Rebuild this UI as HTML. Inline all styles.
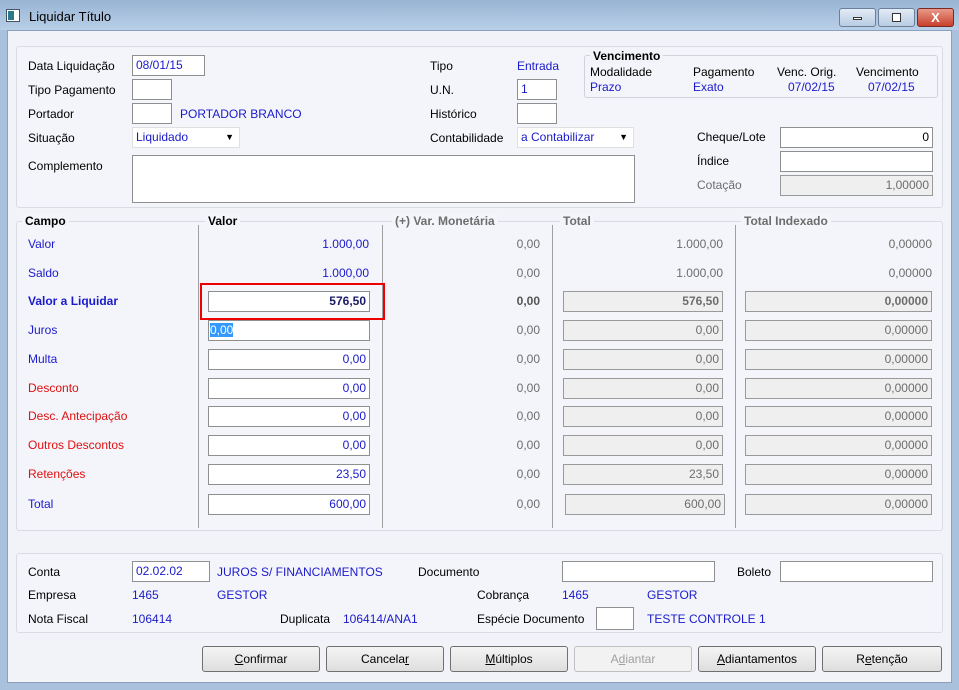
<!DOCTYPE html>
<html><head><meta charset="utf-8"><style>
*{margin:0;padding:0;box-sizing:border-box}
body{width:959px;height:690px;overflow:hidden;background:#a9c1dc;font-family:"Liberation Sans",sans-serif;font-size:12px;color:#000;position:relative}
.a{position:absolute;white-space:nowrap;line-height:14px}
.b{color:#1a1acc}.r{color:#e01010}.g{color:#6d6d6d}
.i{position:absolute;background:#fff;border:1px solid #8e8f8f;height:21px;line-height:19px;padding:0 3px;white-space:nowrap}
.d{background:#efefef;border-color:#9a9a9a;color:#6d6d6d;text-align:right}
.rt{text-align:right}
.grp{position:absolute;border:1px solid #d9dce3;border-radius:3px;background:#f4f5fa}
.btn{position:absolute;top:646px;height:26px;border:1px solid #707070;border-radius:3px;background:linear-gradient(#f4f4f4,#dedede);text-align:center;line-height:24px}
.vl{position:absolute;top:225px;height:303px;width:1px;background:#a0a0a0}
.h{position:absolute;top:214px;font-weight:bold;background:#f4f5fa;padding:0 3px;line-height:14px}
</style></head><body>
<div style="position:absolute;left:0;top:0;width:959px;height:30px;background:linear-gradient(#98b4d4,#b9cfe7)"></div>
<div style="position:absolute;left:6px;top:9px;width:14px;height:13px;background:#fff;border:1px solid #456"><div style="width:6px;height:9px;margin:1px;background:#2a7a8a"></div></div>
<div class="a" style="left:29px;top:10px;font-size:13px">Liquidar Título</div>
<div style="position:absolute;left:839px;top:8px;width:37px;height:19px;border:1px solid #6a7f99;border-radius:3px;background:linear-gradient(#e3ebf5,#b8cbe2)"><div style="margin:8px auto 0;width:9px;height:3px;border:1px solid #333;background:#fff"></div></div>
<div style="position:absolute;left:878px;top:8px;width:37px;height:19px;border:1px solid #6a7f99;border-radius:3px;background:linear-gradient(#e3ebf5,#b8cbe2)"><div style="margin:4px auto 0;width:9px;height:9px;border:1px solid #333;background:#fff"></div></div>
<div style="position:absolute;left:917px;top:8px;width:37px;height:19px;border:1px solid #7a2a20;border-radius:3px;background:linear-gradient(#e89a8a,#c8402c);color:#fff;font-weight:bold;text-align:center;line-height:17px;font-size:13px">X</div>
<div style="position:absolute;left:7px;top:30px;width:945px;height:653px;background:#f2f3f8;border:1px solid #8aa0bc"></div>

<div class="grp" style="left:16px;top:46px;width:927px;height:162px"></div>
<div class="a" style="left:28px;top:59px">Data Liquidação</div>
<div class="i b" style="left:132px;top:55px;width:73px">08/01/15</div>
<div class="a" style="left:28px;top:83px">Tipo Pagamento</div>
<div class="i" style="left:132px;top:79px;width:40px"></div>
<div class="a" style="left:28px;top:107px">Portador</div>
<div class="i" style="left:132px;top:103px;width:40px"></div>
<div class="a b" style="left:180px;top:107px">PORTADOR BRANCO</div>
<div class="a" style="left:28px;top:131px">Situação</div>
<div class="i b" style="left:132px;top:127px;width:108px;border-color:#e0e0e0">Liquidado<span style="position:absolute;right:5px;top:0;font-size:9px;color:#000">▼</span></div>
<div class="a" style="left:28px;top:159px">Complemento</div>
<div class="i" style="left:132px;top:155px;width:503px;height:48px"></div>

<div class="a" style="left:430px;top:59px">Tipo</div>
<div class="a b" style="left:517px;top:59px">Entrada</div>
<div class="a" style="left:430px;top:83px">U.N.</div>
<div class="i b" style="left:517px;top:79px;width:40px">1</div>
<div class="a" style="left:430px;top:107px">Histórico</div>
<div class="i" style="left:517px;top:103px;width:40px"></div>
<div class="a" style="left:430px;top:131px">Contabilidade</div>
<div class="i b" style="left:517px;top:127px;width:117px;border-color:#e0e0e0">a Contabilizar<span style="position:absolute;right:5px;top:0;font-size:9px;color:#000">▼</span></div>

<div class="grp" style="left:584px;top:55px;width:354px;height:43px;border-color:#d0d3da"></div>
<div class="h" style="left:590px;top:49px;background:#f2f3f8">Vencimento</div>
<div class="a" style="left:590px;top:65px">Modalidade</div>
<div class="a" style="left:693px;top:65px">Pagamento</div>
<div class="a" style="left:777px;top:65px">Venc. Orig.</div>
<div class="a" style="left:856px;top:65px">Vencimento</div>
<div class="a b" style="left:590px;top:80px">Prazo</div>
<div class="a b" style="left:693px;top:80px">Exato</div>
<div class="a b" style="left:788px;top:80px">07/02/15</div>
<div class="a b" style="left:868px;top:80px">07/02/15</div>

<div class="a" style="left:697px;top:130px">Cheque/Lote</div>
<div class="i rt" style="left:780px;top:127px;width:153px">0</div>
<div class="a" style="left:697px;top:154px">Índice</div>
<div class="i" style="left:780px;top:151px;width:153px"></div>
<div class="a g" style="left:697px;top:178px">Cotação</div>
<div class="i d" style="left:780px;top:175px;width:153px">1,00000</div>

<div class="grp" style="left:16px;top:221px;width:927px;height:310px"></div>
<div class="vl" style="left:198px"></div><div class="vl" style="left:382px"></div><div class="vl" style="left:552px"></div><div class="vl" style="left:735px"></div>
<div class="h" style="left:22px">Campo</div>
<div class="h" style="left:205px">Valor</div>
<div class="h g" style="left:392px">(+) Var. Monetária</div>
<div class="h g" style="left:560px">Total</div>
<div class="h g" style="left:741px">Total Indexado</div>

<div class="a b" style="left:28px;top:237px">Valor</div>
<div class="a b rt" style="left:269px;top:237px;width:100px">1.000,00</div>
<div class="a g rt" style="left:440px;top:237px;width:100px">0,00</div>
<div class="a g rt" style="left:623px;top:237px;width:100px">1.000,00</div>
<div class="a g rt" style="left:832px;top:237px;width:100px">0,00000</div>
<div class="a b" style="left:28px;top:266px">Saldo</div>
<div class="a b rt" style="left:269px;top:266px;width:100px">1.000,00</div>
<div class="a g rt" style="left:440px;top:266px;width:100px">0,00</div>
<div class="a g rt" style="left:623px;top:266px;width:100px">1.000,00</div>
<div class="a g rt" style="left:832px;top:266px;width:100px">0,00000</div>

<div class="a b" style="left:28px;top:294px;font-weight:bold">Valor a Liquidar</div>
<div style="position:absolute;left:200px;top:283px;width:185px;height:37px;border:2px solid #e00"></div>
<div class="i rt" style="left:208px;top:291px;width:162px;font-weight:bold;color:#1a1a66">576,50</div>
<div class="a rt" style="left:440px;top:294px;width:100px;font-weight:bold;color:#555">0,00</div>
<div class="i d" style="left:563px;top:291px;width:160px;font-weight:bold">576,50</div>
<div class="i d" style="left:745px;top:291px;width:187px;font-weight:bold">0,00000</div>

<div class="a b" style="left:28px;top:323px">Juros</div>
<div class="i" style="left:208px;top:320px;width:162px;padding:0"><span style="background:#3399ff;color:#fff;margin-left:1px">0,00</span></div>
<div class="a g rt" style="left:440px;top:323px;width:100px">0,00</div>
<div class="i d" style="left:563px;top:320px;width:160px">0,00</div>
<div class="i d" style="left:745px;top:320px;width:187px">0,00000</div>

<div class="a b" style="left:28px;top:352px">Multa</div>
<div class="i rt b" style="left:208px;top:349px;width:162px">0,00</div>
<div class="a g rt" style="left:440px;top:352px;width:100px">0,00</div>
<div class="i d" style="left:563px;top:349px;width:160px">0,00</div>
<div class="i d" style="left:745px;top:349px;width:187px">0,00000</div>

<div class="a r" style="left:28px;top:381px">Desconto</div>
<div class="i rt b" style="left:208px;top:378px;width:162px">0,00</div>
<div class="a g rt" style="left:440px;top:381px;width:100px">0,00</div>
<div class="i d" style="left:563px;top:378px;width:160px">0,00</div>
<div class="i d" style="left:745px;top:378px;width:187px">0,00000</div>

<div class="a r" style="left:28px;top:409px">Desc. Antecipação</div>
<div class="i rt b" style="left:208px;top:406px;width:162px">0,00</div>
<div class="a g rt" style="left:440px;top:409px;width:100px">0,00</div>
<div class="i d" style="left:563px;top:406px;width:160px">0,00</div>
<div class="i d" style="left:745px;top:406px;width:187px">0,00000</div>

<div class="a r" style="left:28px;top:438px">Outros Descontos</div>
<div class="i rt b" style="left:208px;top:435px;width:162px">0,00</div>
<div class="a g rt" style="left:440px;top:438px;width:100px">0,00</div>
<div class="i d" style="left:563px;top:435px;width:160px">0,00</div>
<div class="i d" style="left:745px;top:435px;width:187px">0,00000</div>

<div class="a r" style="left:28px;top:467px">Retenções</div>
<div class="i rt b" style="left:208px;top:464px;width:162px">23,50</div>
<div class="a g rt" style="left:440px;top:467px;width:100px">0,00</div>
<div class="i d" style="left:563px;top:464px;width:160px">23,50</div>
<div class="i d" style="left:745px;top:464px;width:187px">0,00000</div>

<div class="a b" style="left:28px;top:497px">Total</div>
<div class="i rt b" style="left:208px;top:494px;width:162px">600,00</div>
<div class="a g rt" style="left:440px;top:497px;width:100px">0,00</div>
<div class="i d" style="left:565px;top:494px;width:160px">600,00</div>
<div class="i d" style="left:745px;top:494px;width:187px">0,00000</div>

<div class="grp" style="left:16px;top:553px;width:927px;height:80px"></div>
<div class="a" style="left:28px;top:565px">Conta</div>
<div class="i b" style="left:132px;top:561px;width:78px">02.02.02</div>
<div class="a b" style="left:217px;top:565px">JUROS S/ FINANCIAMENTOS</div>
<div class="a" style="left:418px;top:565px">Documento</div>
<div class="i" style="left:562px;top:561px;width:153px"></div>
<div class="a" style="left:737px;top:565px">Boleto</div>
<div class="i" style="left:780px;top:561px;width:153px"></div>
<div class="a" style="left:28px;top:588px">Empresa</div>
<div class="a b" style="left:132px;top:588px">1465</div>
<div class="a b" style="left:217px;top:588px">GESTOR</div>
<div class="a" style="left:477px;top:588px">Cobrança</div>
<div class="a b" style="left:562px;top:588px">1465</div>
<div class="a b" style="left:647px;top:588px">GESTOR</div>
<div class="a" style="left:28px;top:612px">Nota Fiscal</div>
<div class="a b" style="left:132px;top:612px">106414</div>
<div class="a" style="left:280px;top:612px">Duplicata</div>
<div class="a b" style="left:343px;top:612px">106414/ANA1</div>
<div class="a" style="left:477px;top:612px">Espécie Documento</div>
<div class="i" style="left:596px;top:607px;width:38px;height:23px"></div>
<div class="a b" style="left:647px;top:612px">TESTE CONTROLE 1</div>

<div class="btn" style="left:202px;width:118px"><u>C</u>onfirmar</div>
<div class="btn" style="left:326px;width:118px">Cancela<u>r</u></div>
<div class="btn" style="left:450px;width:118px"><u>M</u>últiplos</div>
<div class="btn" style="left:574px;width:118px;color:#a0a0a0;border-color:#c0c0c0;background:#f2f2f2">A<u>d</u>iantar</div>
<div class="btn" style="left:698px;width:118px"><u>A</u>diantamentos</div>
<div class="btn" style="left:822px;width:120px">R<u>e</u>tenção</div>
</body></html>
